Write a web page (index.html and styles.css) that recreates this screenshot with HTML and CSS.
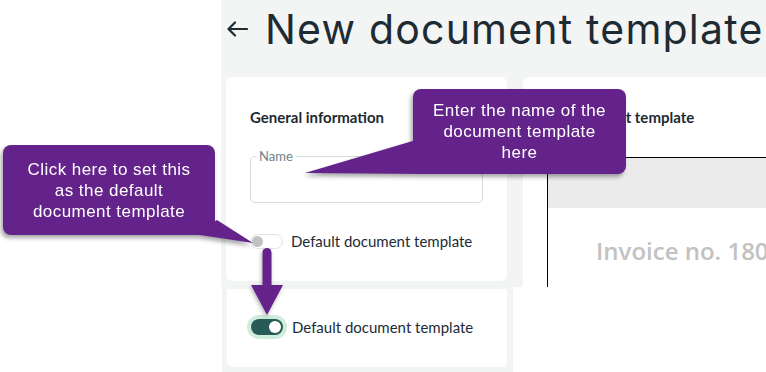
FILE: index.html
```html
<!DOCTYPE html>
<html>
<head>
<meta name="viewport" content="width=device-width, initial-scale=1">
<title>New document template</title>
<link rel="stylesheet" href="styles.css">
</head>
<body>

<div class="page">

    <!-- Screenshot of the form -->
    <div class="shot">
        <div class="title-bar">
            <svg class="back" width="22" height="16" viewBox="0 0 22 16">
                <path d="M21 8H2.5M9 1.5L2.5 8L9 14.5" fill="none" stroke="#1f2b33" stroke-width="2.2" stroke-linecap="round" stroke-linejoin="round"/>
            </svg>
            <h1>New document template</h1>
        </div>

        <div class="cards">
            <section class="card card-info">
                <h2>General information</h2>
                <fieldset class="field">
                    <legend>Name</legend>
                    <div class="field-input"></div>
                </fieldset>
                <div class="switch-row">
                    <span class="switch"><span class="knob"></span></span>
                    Default document template
                </div>
            </section>

            <section class="card card-preview">
                <h2>Letter layout template</h2>
                <div class="preview">
                    <div class="preview-band"></div>
                    <div class="preview-title">Invoice no. 1804</div>
                </div>
            </section>
        </div>
    </div>

    <!-- Cropped screenshot: switch turned on -->
    <div class="shot-crop">
        <div class="card card-crop">
            <div class="switch-row">
                <span class="switch on"><span class="knob"></span></span>
                Default document template
            </div>
        </div>
    </div>

    <!-- Annotations -->
    <div class="callout callout-default">
        <svg class="tail" width="60" height="30" viewBox="0 0 60 30">
            <polygon points="0,16 24,2 60,25"/>
        </svg>
        <p>Click here to set this<br>as the default<br>document template</p>
    </div>

    <div class="callout callout-name">
        <svg class="tail" width="120" height="40" viewBox="0 0 120 40">
            <polygon points="111,4 120,38 0,37"/>
        </svg>
        <p>Enter the name of the<br>document template<br>here</p>
    </div>

    <svg class="down-arrow" width="36" height="72" viewBox="0 0 36 72">
        <line x1="18" y1="6.5" x2="18" y2="42" stroke="#64238a" stroke-width="9" stroke-linecap="round"/>
        <polygon points="2,39 34,39 18,69" fill="#64238a"/>
    </svg>

</div>

</body>
</html>
```

FILE: styles.css
```css
body {
    margin: 0;
    background-color: #fff;
    font-family: Lato, "Liberation Sans", sans-serif;
    color: #1d2c38;
}

.page {
    position: relative;
    width: 766px;
    height: 372px;
    overflow: hidden;
}

/* Screenshot of the form */
.shot {
    margin-left: 221px;
    height: 287px;
    padding-left: 5px;
    background-color: #f3f5f5;
    overflow: hidden;
}

.title-bar {
    display: flex;
    align-items: center;
    gap: 17px;
    height: 58px;
    margin-bottom: 19px;
}

.title-bar h1 {
    margin: 0;
    font-family: Inter, "Open Sans", sans-serif;
    font-weight: 400;
    font-size: 41px;
    letter-spacing: 1.2px;
    line-height: 48px;
    color: #1f2b33;
    white-space: nowrap;
}

.back {
    flex: none;
}

.cards {
    display: flex;
    align-items: flex-start;
    gap: 16px;
}

.card {
    background-color: #fff;
    border-radius: 6px;
    padding: 30px 24px;
    box-sizing: border-box;
}

.card h2 {
    margin: 0;
    font-size: 15px;
    font-weight: 700;
    line-height: 20px;
    color: #1d2a33;
    white-space: nowrap;
}

.card-info {
    flex: none;
    width: 281px;
    height: 204px;
}

.card-preview {
    flex: none;
    width: 300px;
    height: 260px;
    padding-right: 0;
}

/* Outlined text field */
.field {
    margin: 22px 0 0;
    padding: 0 5px;
    border: 1px solid #d6dcdf;
    border-radius: 5px;
    min-inline-size: 0;
}

.field legend {
    padding: 0 3px;
    font-size: 13px;
    line-height: 14px;
    color: #6e808c;
}

.field-input {
    height: 39px;
}

/* Switch */
.switch-row {
    display: flex;
    align-items: center;
    gap: 8px;
    height: 20px;
    margin-top: 28px;
    font-size: 15px;
    white-space: nowrap;
}

.switch {
    position: relative;
    width: 33px;
    height: 15px;
    border: 1px solid #e2e4e6;
    border-radius: 9px;
    background-color: #fff;
    box-sizing: border-box;
}

.switch .knob {
    position: absolute;
    left: 1px;
    top: 1px;
    width: 11px;
    height: 11px;
    border-radius: 50%;
    background-color: #c2c2c2;
}

.switch.on {
    width: 32px;
    height: 16px;
    margin: 0 1px 0 4px;
    border: none;
    background-color: #285a57;
    box-shadow: 0 0 0 4px #d0ecdc;
}

.switch.on .knob {
    left: auto;
    right: 2px;
    top: 2px;
    width: 12px;
    height: 12px;
    background-color: #fff;
}

/* Preview of the printed document */
.preview {
    margin-top: 30px;
    border-top: 1px solid #000;
    border-left: 1px solid #000;
    height: 200px;
}

.preview-band {
    height: 50px;
    background-color: #ebebeb;
}

.preview-title {
    padding: 26px 0 0 48px;
    font-family: "Open Sans", sans-serif;
    font-size: 24px;
    font-weight: 600;
    color: #c2c2c2;
    white-space: nowrap;
}

/* Cropped screenshot */
.shot-crop {
    margin-left: 222px;
    width: 291px;
    height: 85px;
    padding: 2px 6px 0 5px;
    box-sizing: border-box;
    background-color: #f3f5f5;
}

.card-crop {
    height: 78px;
    padding: 28px 20px 0;
    border-radius: 0 0 6px 6px;
}

.card-crop .switch-row {
    margin-top: 0;
}

/* Annotations */
.callout {
    position: absolute;
    display: flex;
    align-items: center;
    justify-content: center;
    box-sizing: border-box;
    border-radius: 8px;
    background-color: #64238a;
    color: #fff;
    font-family: "Liberation Sans", Arial, sans-serif;
    font-size: 17px;
    letter-spacing: 0.45px;
    line-height: 21px;
    text-align: center;
    filter: drop-shadow(-2px 3px 2px rgba(0, 0, 0, 0.35));
}

.callout p {
    position: relative;
    margin: 0;
}

.callout .tail {
    position: absolute;
    fill: #64238a;
}

.callout-default {
    left: 3px;
    top: 145px;
    width: 212px;
    height: 90px;
}

.callout-default .tail {
    left: 190px;
    top: 73px;
}

.callout-name {
    left: 413px;
    top: 89px;
    width: 213px;
    height: 85px;
}

.callout-name .tail {
    left: -108px;
    top: 47px;
}

.down-arrow {
    position: absolute;
    left: 249px;
    top: 246px;
    filter: drop-shadow(-1px 2px 2px rgba(0, 0, 0, 0.3));
}
```
